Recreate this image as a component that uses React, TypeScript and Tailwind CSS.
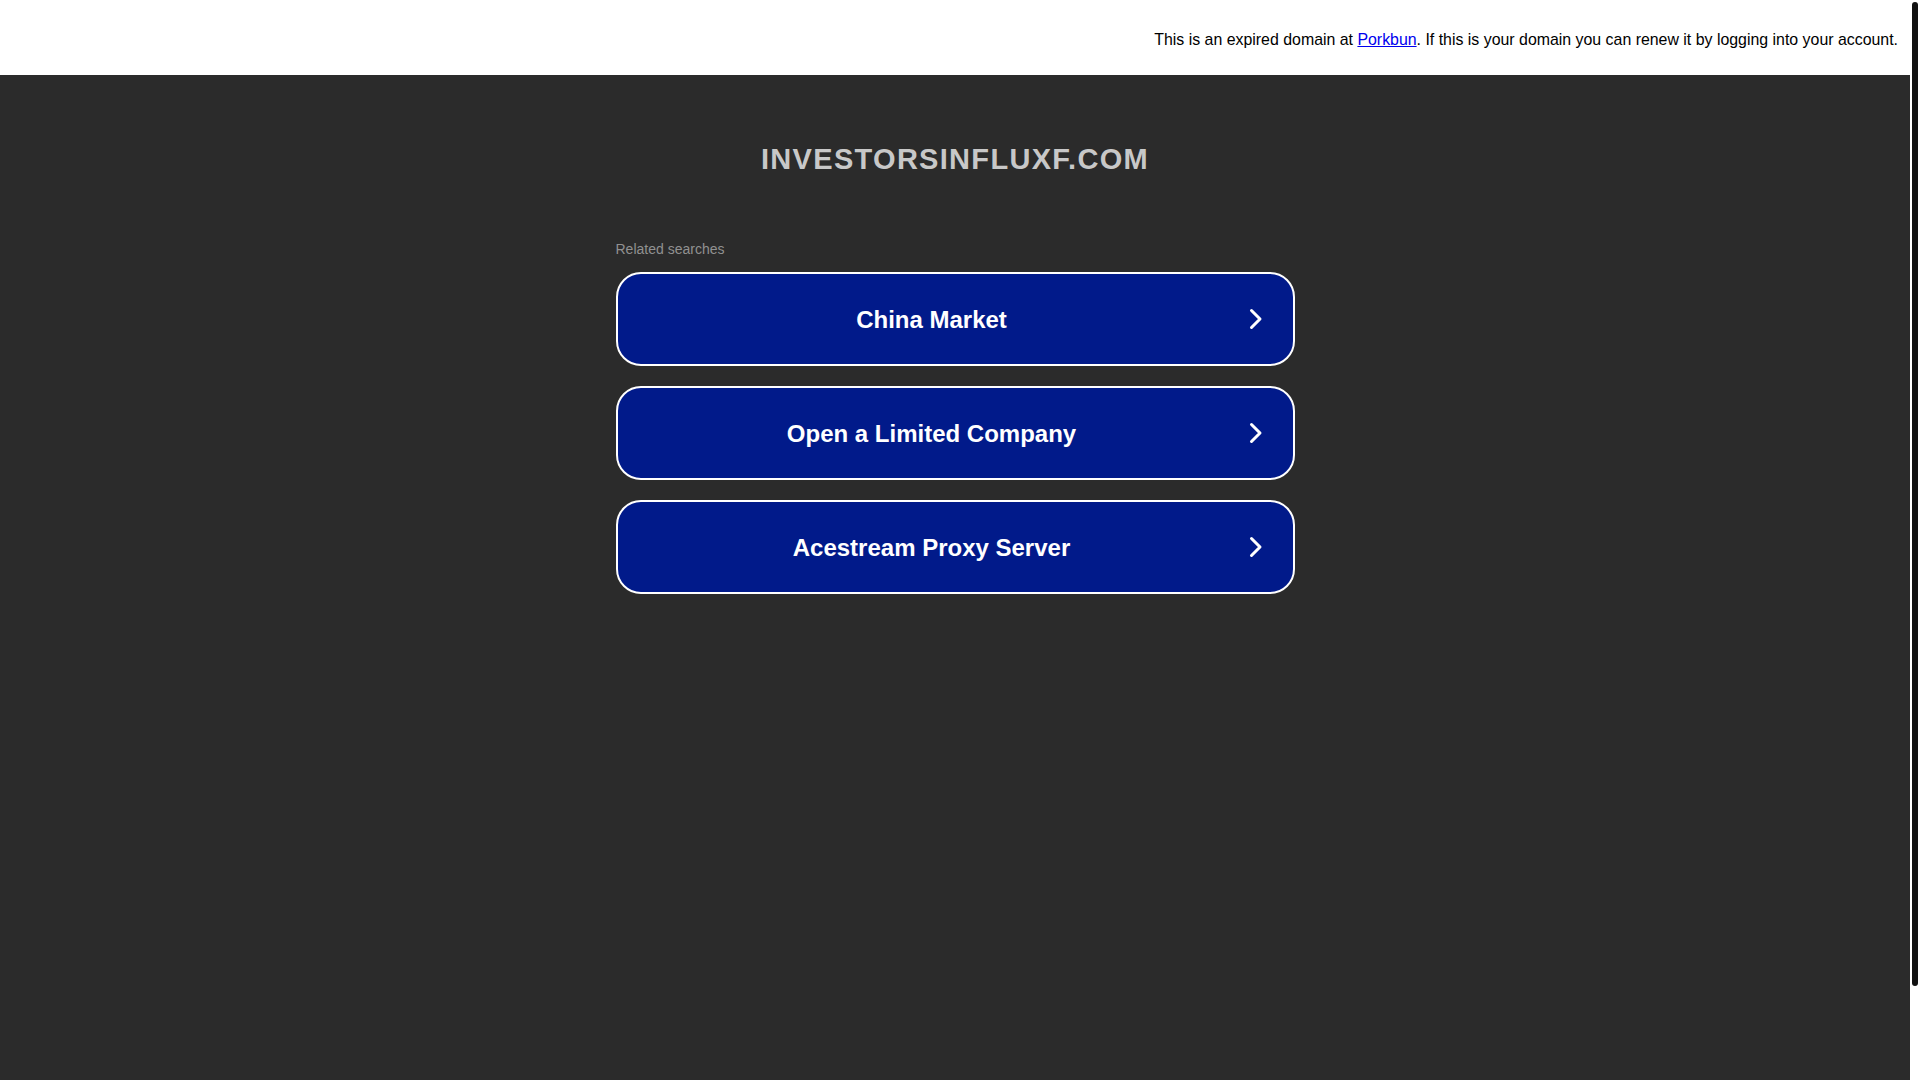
import React from "react";

const items = ["China Market", "Open a Limited Company", "Acestream Proxy Server"];

function Chevron() {
  return (
    <svg width="20" height="24" viewBox="0 0 20 24" className="shrink-0 mr-[27px]" fill="none">
      <path d="M5.5 3.5 L14 12 L5.5 20.5" stroke="#ffffff" strokeWidth="3" strokeLinecap="round" strokeLinejoin="round" />
    </svg>
  );
}

export default function App() {
  return (
    <div
      className="h-[1080px] overflow-hidden flex bg-white"
      style={{ fontFamily: '"Liberation Sans", Arial, sans-serif' }}
    >
      <div className="flex-1 min-w-0 bg-[#2b2b2b] flex flex-col">
        <div className="h-[75px] bg-white pt-[31px] pr-[12px] text-right text-[15.9px] leading-[18px] text-black">
          This is an expired domain at{" "}
          <a href="#" className="text-[#0000ee] underline">
            Porkbun
          </a>
          . If this is your domain you can renew it by logging into your account.
        </div>
        <div className="flex flex-col items-center">
          <h1 className="mt-[68px] text-[29px] leading-[33px] font-bold tracking-[1.3px] text-[#c8c8c8]">
            INVESTORSINFLUXF.COM
          </h1>
          <div className="mt-[65px] w-[679px] flex flex-col">
            <div className="text-[14px] leading-[16px] text-[#919191]">Related searches</div>
            <div className="mt-[15px] flex flex-col gap-[20px]">
              {items.map((t) => (
                <a
                  key={t}
                  href="#"
                  className="h-[94px] rounded-[25px] border-2 border-white bg-[#011a8a] flex items-center"
                >
                  <span className="flex-1 text-center text-white font-bold text-[24px] leading-[28px] pt-[2px]">
                    {t}
                  </span>
                  <Chevron />
                </a>
              ))}
            </div>
          </div>
        </div>
      </div>
      <div className="w-[10px] shrink-0 bg-white pt-[2px] pb-[94px] px-[2px] flex">
        <div className="flex-1 rounded-full bg-[#111111]" />
      </div>
    </div>
  );
}
